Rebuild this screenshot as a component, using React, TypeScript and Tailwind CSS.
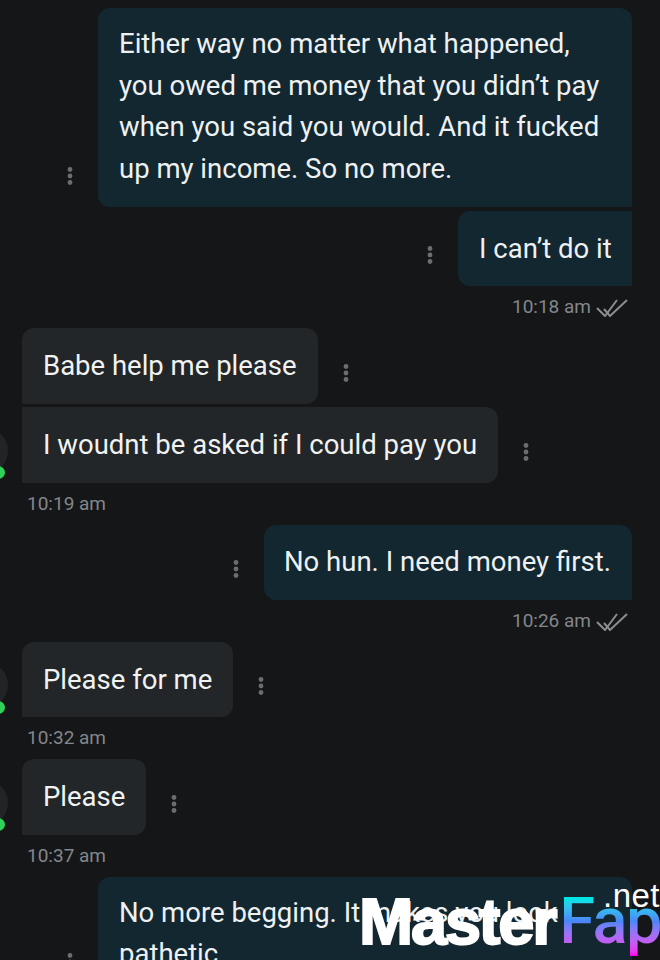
import React from 'react';

function Kebab() {
  return (
    <svg width="6" height="20" viewBox="0 0 6 20" className="shrink-0 mb-[21px]" fill="#6b6e70">
      <circle cx="3" cy="3.5" r="2.4" />
      <circle cx="3" cy="10" r="2.4" />
      <circle cx="3" cy="16.5" r="2.4" />
    </svg>
  );
}

function DoubleCheck() {
  return (
    <svg width="32" height="20" viewBox="0 0 32 20" fill="none" stroke="#8b8e90" strokeWidth="2">
      <path d="M1 11l8 8L21 3" />
      <path d="M8 12l6 7L31 3" />
    </svg>
  );
}

function Outgoing({ lines, radius, width, pad }: { lines: string[]; radius: string; width: string; pad: string }) {
  return (
    <div className="flex justify-end items-end gap-[25px] pr-[28px]">
      <Kebab />
      <div className={`bg-[#132730] text-[#eef1f2] ${pad} ${width} ${radius}`}>
        {lines.map((l) => (
          <p key={l} className="whitespace-nowrap">{l}</p>
        ))}
      </div>
    </div>
  );
}

function Incoming({ text, radius }: { text: string; radius: string }) {
  return (
    <div className="flex items-end gap-[25px] pl-[22px]">
      <div className={`bg-[#222628] text-[#f1f2f2] px-[21px] py-[17px] whitespace-nowrap ${radius}`}>
        {text}
      </div>
      <Kebab />
    </div>
  );
}

function TimeRight({ time }: { time: string }) {
  return (
    <div className="flex justify-end items-center gap-[5px] pr-[32px] mt-[11px] mb-[11px] h-[20px] text-[19px] text-[#83878a]">
      <span>{time}</span>
      <DoubleCheck />
    </div>
  );
}

function TimeLeft({ time }: { time: string }) {
  return (
    <div className="flex items-center pl-[27px] mt-[11px] mb-[11px] h-[20px] text-[19px] text-[#83878a]">
      {time}
    </div>
  );
}

export default function App() {
  return (
    <div
      className="relative w-[660px] h-[960px] overflow-hidden bg-[#151618] pt-[8px] text-[27.5px] leading-[41.5px]"
      style={{ fontFamily: 'Roboto, sans-serif' }}
    >
      <div className="flex flex-col gap-[4px]">
        <Outgoing
          width="w-[534px]"
          pad="pl-[21px] pt-[15px] pb-[18px]"
          radius="rounded-t-[12px] rounded-bl-[12px]"
          lines={[
            'Either way no matter what happened,',
            'you owed me money that you didn’t pay',
            'when you said you would. And it fucked',
            'up my income. So no more.',
          ]}
        />
        <Outgoing
          width="w-[174px]"
          pad="pl-[21px] pt-[16.5px] pb-[17px]"
          radius="rounded-l-[12px]"
          lines={['I can’t do it']}
        />
      </div>
      <TimeRight time="10:18 am" />

      <div className="flex flex-col gap-[3.5px]">
        <Incoming text="Babe help me please" radius="rounded-t-[12px] rounded-br-[12px]" />
        <Incoming text="I woudnt be asked if I could pay you" radius="rounded-r-[12px]" />
      </div>
      <TimeLeft time="10:19 am" />

      <Outgoing
        width="w-[368px]"
        pad="pl-[20px] pt-[16.5px] pb-[17px]"
        radius="rounded-t-[12px] rounded-bl-[12px]"
        lines={['No hun. I need money first.']}
      />
      <TimeRight time="10:26 am" />

      <Incoming text="Please for me" radius="rounded-t-[12px] rounded-br-[12px]" />
      <TimeLeft time="10:32 am" />

      <Incoming text="Please" radius="rounded-t-[12px] rounded-br-[12px]" />
      <TimeLeft time="10:37 am" />

      <Outgoing
        width="w-[534px]"
        pad="pl-[21px] pt-[15px] pb-[18px]"
        radius="rounded-t-[12px] rounded-bl-[12px]"
        lines={['No more begging. It makes you look', 'pathetic.']}
      />

      {/* avatars cut off by the left edge */}
      {[428, 662, 780].map((top) => (
        <div key={top} className="absolute left-[-38px] w-[46px] h-[46px] rounded-full bg-[#222527]" style={{ top }} />
      ))}
      {[472, 707, 824].map((y) => (
        <div key={y} className="absolute left-[-8px] w-[13px] h-[13px] rounded-full bg-[#2fd158]" style={{ top: y - 6 }} />
      ))}

      {/* watermark */}
      <div className="absolute left-[359px] top-[884px] flex items-start">
        <span
          className="text-white text-[65px] leading-[75px] font-bold tracking-[-2.2px] [-webkit-text-stroke:2px_white]"
          style={{ fontFamily: '"Liberation Sans", sans-serif' }}
        >
          Master
        </span>
        <span className="ml-[4px] bg-gradient-to-b from-[#00e5e5] from-[20%] via-[#4a86f8] via-[50%] to-[#f800f0] to-[95%] bg-clip-text text-transparent text-[65px] leading-[75px] font-medium tracking-[-1.5px]">
          Fap
        </span>
      </div>
      <span
        className="absolute left-[603px] top-[878px] text-[33px] leading-[36px] text-white tracking-[0.5px]"
        style={{ fontFamily: '"Liberation Sans", sans-serif' }}
      >
        .net
      </span>
    </div>
  );
}
